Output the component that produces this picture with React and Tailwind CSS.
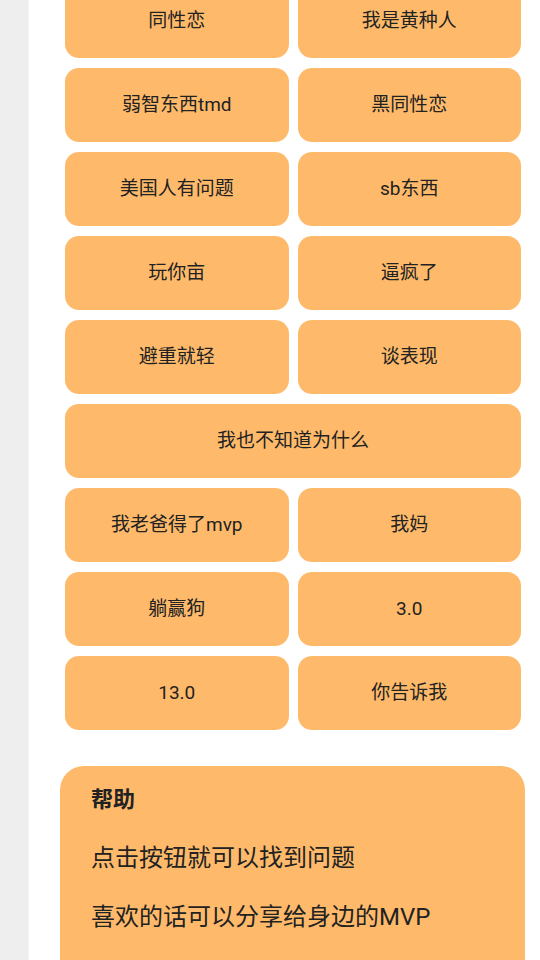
import React from "react";

const buttons = [
  ["同性恋", "我是黄种人"],
  ["弱智东西tmd", "黑同性恋"],
  ["美国人有问题", "sb东西"],
  ["玩你亩", "逼疯了"],
  ["避重就轻", "谈表现"],
  ["我也不知道为什么"],
  ["我老爸得了mvp", "我妈"],
  ["躺赢狗", "3.0"],
  ["13.0", "你告诉我"],
];

const App = () => {
  return (
    <div
      className="flex h-[960px] overflow-hidden bg-white text-[#222222]"
      style={{ fontFamily: 'Roboto, "Noto Sans CJK SC", sans-serif' }}
    >
      <div className="w-[29px] shrink-0 bg-[#eeeeee] border-r border-[#f4f4f4]" />
      <div className="flex-1 pl-[31px] pr-[15px]">
        <div className="-mt-[16px] ml-[5px] mr-[4px] grid grid-cols-2 gap-x-[9px] gap-y-[10px]">
          {buttons.map((row) =>
            row.map((label) => (
              <button
                key={label}
                className={`h-[74px] rounded-[14px] bg-[#feba6a] text-[19px] ${
                  row.length === 1 ? "col-span-2" : ""
                }`}
              >
                {label}
              </button>
            ))
          )}
        </div>

        <div className="mt-[36px] rounded-[24px] bg-[#feba6a] pl-[31px] pt-[18px] pb-[60px]">
          <h2 className="text-[22px] font-bold leading-[32px]">帮助</h2>
          <p className="mt-[26px] text-[24px] leading-[32px]">点击按钮就可以找到问题</p>
          <p className="mt-[27px] text-[24px] leading-[32px]">喜欢的话可以分享给身边的MVP</p>
        </div>
      </div>
    </div>
  );
};

export default App;
